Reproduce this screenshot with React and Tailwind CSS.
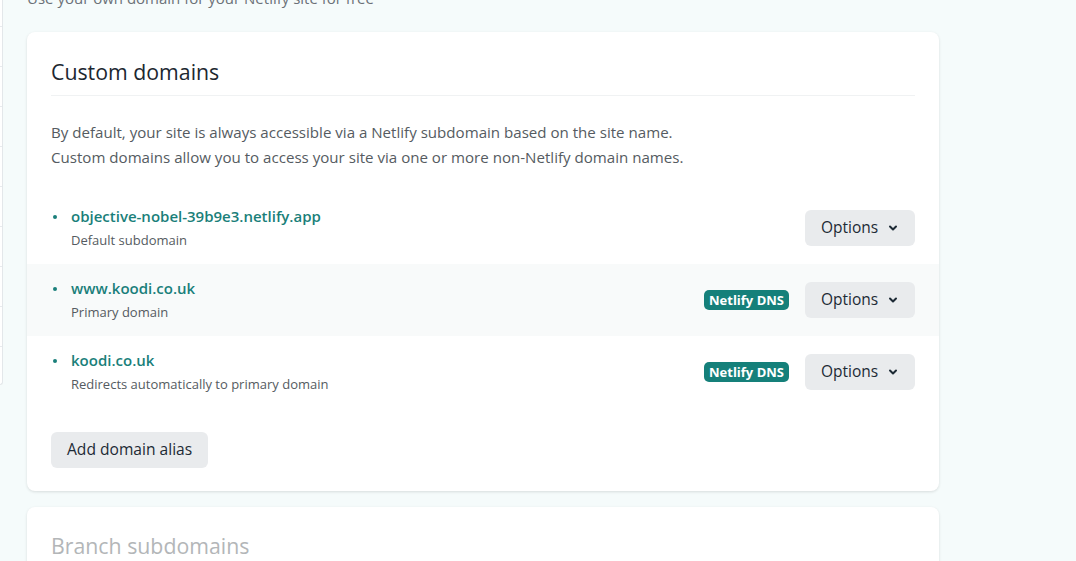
import { ChevronDown } from "lucide-react";

const font = { fontFamily: '"Open Sans", "Noto Sans", sans-serif' };

const domains = [
  { name: "objective-nobel-39b9e3.netlify.app", note: "Default subdomain", dns: false },
  { name: "www.koodi.co.uk", note: "Primary domain", dns: true, active: true },
  { name: "koodi.co.uk", note: "Redirects automatically to primary domain", dns: true },
];

function OptionsButton() {
  return (
    <button className="flex h-9 w-[110px] items-center justify-between rounded-md bg-[#e9ebed] pl-4 pr-4 text-[15.5px] text-[#1d2a35]">
      <span>Options</span>
      <ChevronDown className="h-3 w-3" strokeWidth={4} />
    </button>
  );
}

function DomainRow({ d }) {
  return (
    <li className={`-mx-6 flex items-center px-6 py-3 ${d.active ? "bg-[#f8fafa]" : ""}`}>
      <div className="flex flex-1 items-start">
        <span className="mt-[11px] mr-[14px] ml-[2px] h-[4px] w-[4px] rounded-full bg-[#1a7f7a]" />
        <div>
          <a className="block text-[15px] font-semibold leading-6 text-[#1a7f7a]">{d.name}</a>
          <div className="text-[13px] leading-6 text-[#555b61]">{d.note}</div>
        </div>
      </div>
      {d.dns && (
        <span className="mr-4 rounded-[5px] bg-[#15807a] px-[5px] text-[13px] font-bold leading-5 text-white">
          Netlify DNS
        </span>
      )}
      <OptionsButton />
    </li>
  );
}

export default function App() {
  return (
    <div className="flex h-[561px] overflow-hidden bg-[#f5fbfb]" style={font}>
      <div className="mt-[-13px] flex h-[398px] w-[3px] flex-col rounded-br-md border-r border-b border-[#e3e7ea] bg-white">
        {Array.from({ length: 9 }).map((_, i) => (
          <div key={i} className="h-10 shrink-0 border-b border-[#e8ebee]" />
        ))}
      </div>
      <main className="flex-1 pl-6">
        <p className="mt-[-14px] mb-[22px] text-[15px] leading-6 text-[#6b7178]">
          Use your own domain for your Netlify site for free
        </p>
        <section className="w-[912px] rounded-lg bg-white px-6 pt-6 pb-[23px] shadow-[0_1px_3px_rgba(0,0,0,0.12)]">
          <h2 className="border-b border-[#f0f2f3] pt-px pb-[8px] text-[21.3px] leading-[30px] text-[#1c2730]">
            Custom domains
          </h2>
          <p className="mt-[24px] text-[15.1px] leading-[25px] text-[#555b61]">
            By default, your site is always accessible via a Netlify subdomain based on the site name.
            <br />
            Custom domains allow you to access your site via one or more non-Netlify domain names.
          </p>
          <ul className="mt-[22px]">
            {domains.map((d) => (
              <DomainRow key={d.name} d={d} />
            ))}
          </ul>
          <button className="mt-6 h-9 rounded-md bg-[#e9ebed] px-4 text-[15.6px] text-[#1d2a35]">
            Add domain alias
          </button>
        </section>
        <section className="mt-4 w-[912px] rounded-lg bg-white px-6 pt-6 pb-6 shadow-[0_1px_3px_rgba(0,0,0,0.12)]">
          <h2 className="text-[21.3px] leading-[30px] text-[#b3b6b8]">Branch subdomains</h2>
        </section>
      </main>
    </div>
  );
}
